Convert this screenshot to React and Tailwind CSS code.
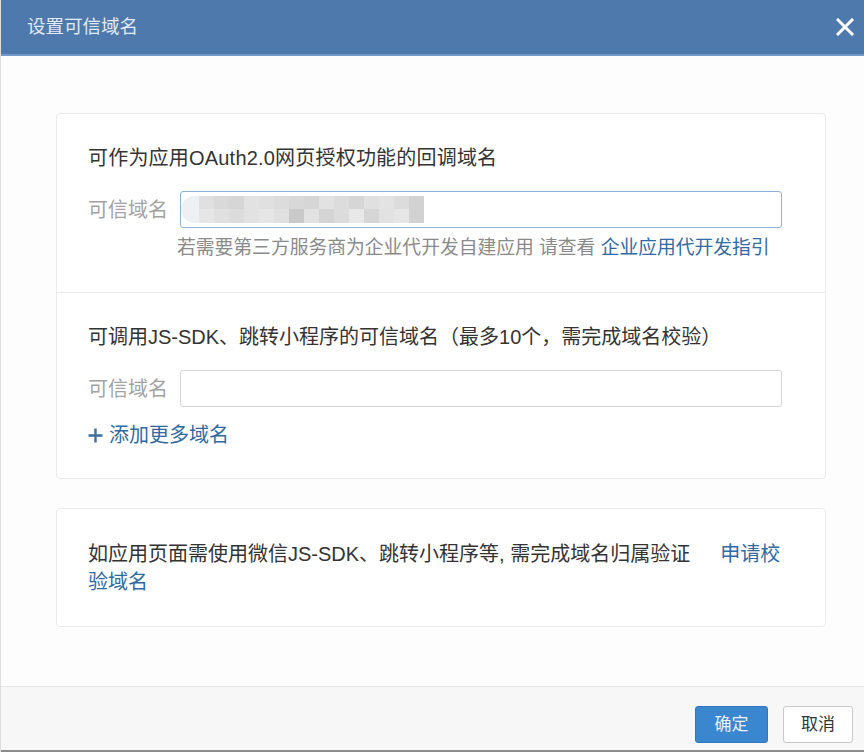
import React from "react";

const FONT = { fontFamily: '"Liberation Sans", "Noto Sans CJK SC", sans-serif' };

const row1 = ["#e0e0e0", "#d9d9d9", "#d6d6d6", "#e2e2e2", "#e0e0e0", "#dcdcdc", "#d8d8d8", "#d6d6d6", "#e2e2e2", "#dcdcdc", "#d6d6d6", "#e0e0e0", "#e3e3e3", "#dcdcdc", "#d2d2d2"];
const row2 = ["#e6e6e6", "#e0e0e0", "#dcdcdc", "#e2e2e2", "#e6e6e6", "#e0e0e0", "#c9c9c9", "#e2e2e2", "#d4d4d4", "#dcdcdc", "#e8e8e8", "#d6d6d6", "#e2e2e2", "#e6e6e6", "#d2d2d2"];

function Blurred() {
  return (
    <div className="flex items-center h-full blur-[0.6px]">
      <div className="w-[18px] h-[27px] rounded-l-full bg-[#eef0f3]" />
      <div className="flex flex-col">
        <div className="flex">
          {row1.map((c, i) => (
            <div key={i} className="w-[15px] h-[13px]" style={{ background: c }} />
          ))}
        </div>
        <div className="flex">
          {row2.map((c, i) => (
            <div key={i} className="w-[15px] h-[14px]" style={{ background: c }} />
          ))}
        </div>
      </div>
    </div>
  );
}

function Label() {
  return <div className="w-[92px] shrink-0 text-[20px] leading-[22px] text-[#a3a3a3]">可信域名</div>;
}

export default function App() {
  return (
    <div style={FONT} className="w-[864px] h-[752px] flex flex-col bg-[#fdfdfd] border-l border-[#dedede] overflow-hidden">
      {/* header */}
      <div className="h-[56px] shrink-0 bg-[#4e79ac] border-b-2 border-[#7199c9] flex items-center justify-between pl-[26px] pr-[10px]">
        <div className="text-[18.5px] text-[#e3eaf3] leading-[24px]">设置可信域名</div>
        <svg width="18" height="18" viewBox="0 0 18 18">
          <path d="M2 2 L16 16 M16 2 L2 16" stroke="#ffffff" strokeWidth="3" strokeLinecap="square" />
        </svg>
      </div>

      {/* body */}
      <div className="h-[630px] shrink-0 pt-[57px] pl-[55px]">
        <div className="w-[770px] bg-white border border-[#ebebeb] rounded-[4px]">
          <div className="px-[31px] pt-[33px] pb-[33px] border-b border-[#ebebeb]">
            <div className="text-[20px] leading-[22px] text-[#333333] tracking-[0.2px]">可作为应用OAuth2.0网页授权功能的回调域名</div>
            <div className="flex items-center mt-[22px]">
              <Label />
              <div className="w-[602px] h-[37px] border border-[#8fb2db] rounded-[3px] bg-white overflow-hidden">
                <Blurred />
              </div>
            </div>
            <div className="mt-[9px] pl-[89px] text-[18.8px] leading-[22px] text-[#8a8a8a] whitespace-nowrap">
              若需要第三方服务商为企业代开发自建应用 请查看 <span className="text-[#2f6aa3]">企业应用代开发指引</span>
            </div>
          </div>
          <div className="px-[31px] pt-[33px] pb-[32px]">
            <div className="text-[20px] leading-[22px] text-[#333333] whitespace-nowrap">可调用JS-SDK、跳转小程序的可信域名（最多10个，需完成域名校验）</div>
            <div className="flex items-center mt-[22px]">
              <Label />
              <div className="w-[602px] h-[37px] border border-[#d6d6d6] rounded-[3px] bg-white" />
            </div>
            <div className="mt-[17px] flex items-center text-[20px] leading-[22px] text-[#2f6aa3]">
              <svg width="15" height="15" viewBox="0 0 15 15" className="mr-[6px]">
                <path d="M7.5 0.5 V14.5 M0.5 7.5 H14.5" stroke="#3f6f9f" strokeWidth="2.4" />
              </svg>
              添加更多域名
            </div>
          </div>
        </div>

        <div className="w-[770px] mt-[29px] bg-white border border-[#ebebeb] rounded-[4px] px-[31px] pt-[31px] pb-[30px]">
          <div className="text-[20px] leading-[28px] text-[#333333]">
            <span className="whitespace-nowrap">如应用页面需使用微信JS-SDK、跳转小程序等, 需完成域名归属验证</span>
            <span className="ml-[30px] text-[#2f6aa3]">申请校</span>
            <br />
            <span className="text-[#2f6aa3]">验域名</span>
          </div>
        </div>
      </div>

      {/* footer */}
      <div className="flex-1 bg-[#f7f7f7] border-t border-[#e6e6e6] border-b-2 border-b-[#8c8c8c] flex items-start justify-end pt-[19px] pr-[11px] gap-[15px]">
        <button className="w-[73px] h-[37px] rounded-[3px] bg-[#3a86cf] border border-[#2f78c0] text-[17px] text-[#e8f1fa]">确定</button>
        <button className="w-[70px] h-[37px] rounded-[3px] bg-white border border-[#c9c9c9] text-[17px] text-[#333333]">取消</button>
      </div>
    </div>
  );
}
